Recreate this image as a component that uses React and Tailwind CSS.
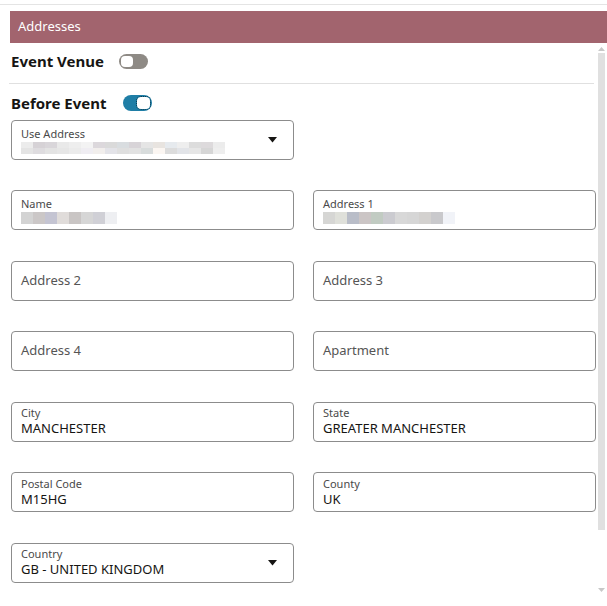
import React from "react";

const font = { fontFamily: '"Noto Sans", "Open Sans", sans-serif' };

function Mosaic({ rows }) {
    return (
        <div className="flex flex-col">
            {rows.map((row, i) => (
                <div key={i} className="flex">
                    {row.map((c, j) => (
                        <div key={j} className="h-[6px] w-[12px]" style={{ backgroundColor: c }} />
                    ))}
                </div>
            ))}
        </div>
    );
}

function Caret() {
    return (
        <svg width="9" height="6" viewBox="0 0 9 6" className="shrink-0">
            <path d="M0 0 L9 0 L4.5 5.5 Z" fill="#161513" />
        </svg>
    );
}

function Field({ label, value, blur, select, empty }) {
    return (
        <div className="h-10 rounded-[4px] border border-[#8c8c8c] bg-white flex items-center pl-[9px] pr-[16px]">
            {empty ? (
                <span className="text-[13px] text-[#555555]">{label}</span>
            ) : (
                <div className="flex-1 flex flex-col justify-center min-w-0">
                    <span className="text-[11px] leading-[14px] text-[#4a4a4a]">{label}</span>
                    {blur ? (
                        <div className="mt-[1px]">{blur}</div>
                    ) : (
                        <span className="text-[13px] leading-[17px] text-[#161513]">{value}</span>
                    )}
                </div>
            )}
            {select && <Caret />}
        </div>
    );
}

function Toggle({ on }) {
    return on ? (
        <div className="w-[29px] h-[16px] rounded-full bg-[#1f7ea6] flex items-center justify-end pr-[2px]">
            <div className="w-[13px] h-[12px] rounded-[4px] bg-white outline-1 outline-dotted outline-[#0b3c52]" />
        </div>
    ) : (
        <div className="w-[29px] h-[15px] rounded-full bg-[#8e8a85] flex items-center pl-[2px]">
            <div className="w-[12px] h-[11px] rounded-[4px] bg-white" />
        </div>
    );
}

const useAddrRows = [
    ["#ececec", "#d6d2d6", "#d9d6da", "#e9e9e9", "#eeeeee", "#f3f3f3", "#dcd8dc", "#dadada", "#d9dde0", "#d8d4d8", "#e5e5e5", "#e8e4e0", "#e6eaee", "#eeeeee", "#dcdcdc", "#dddadc", "#ececec"],
    ["#e4e4e4", "#dedcdf", "#e3e3e3", "#e6e6e6", "#ebebeb", "#efedf2", "#f1eeec", "#e3e3e8", "#dfdfdf", "#e2e2e2", "#d8dcdc", "#fbf6f2", "#dcdcdc", "#e2e4e8", "#e6e6e6", "#d6d6d6", "#eeeeee"],
];
const nameRow = ["#d3d3d3", "#cbc7c7", "#c4c4d2", "#e0dcda", "#c9c5c4", "#d6d6d6", "#d0d0d6", "#eeeff2"];
const addr1Row = ["#d6d6d4", "#dfe0da", "#b9bdc8", "#cbc5c5", "#c1cbc2", "#cbcbd0", "#d8d8d8", "#d6d6d6", "#d3d1cf", "#c9c9cc", "#f1f3f8"];

export default function App() {
    return (
        <div className="w-[607px] h-[606px] bg-white overflow-hidden pt-[4px]" style={font}>
            <div className="h-px bg-[#e4e4e4]" />
            <div className="pl-[10px] pt-[6px]">
                <div className="h-[32px] bg-[#a2646e] flex items-center px-[8px] text-[13px] text-white">Addresses</div>
            </div>
            <div className="flex">
                <div className="w-[596px] shrink-0 pl-[11px]">
                    <div className="h-[40px] flex items-center gap-[15px] pb-[4px]">
                        <span className="text-[15px] font-bold text-[#161513]">Event Venue</span>
                        <Toggle />
                    </div>
                    <div className="h-px bg-[#e0e0e0] -ml-[2px] mr-[2px]" />
                    <div className="h-[36px] flex items-center gap-[16px] pt-[2px]">
                        <span className="text-[15px] font-bold text-[#161513]">Before Event</span>
                        <Toggle on />
                    </div>
                    <div className="w-[283px]">
                        <Field label="Use Address" select blur={<Mosaic rows={useAddrRows} />} />
                    </div>
                    <div className="mt-[30px] grid grid-cols-2 gap-x-[19px] gap-y-[30.6px] w-[585px]">
                        <Field label="Name" blur={<Mosaic rows={[nameRow, nameRow]} />} />
                        <Field label="Address 1" blur={<Mosaic rows={[addr1Row, addr1Row]} />} />
                        <Field label="Address 2" empty />
                        <Field label="Address 3" empty />
                        <Field label="Address 4" empty />
                        <Field label="Apartment" empty />
                        <Field label="City" value="MANCHESTER" />
                        <Field label="State" value="GREATER MANCHESTER" />
                        <Field label="Postal Code" value="M15HG" />
                        <Field label="County" value="UK" />
                        <Field label="Country" value="GB - UNITED KINGDOM" select />
                    </div>
                </div>
                <div className="w-[11px] flex flex-col items-center pt-[4px] h-[558px]">
                    <svg width="7" height="4" viewBox="0 0 7 4"><path d="M0 4 L3.5 0 L7 4 Z" fill="#c8c8c8" /></svg>
                    <div className="mt-[2px] w-[7px] h-[477px] bg-[#e0e0e0]" />
                    <div className="flex-1" />
                    <svg width="7" height="4" viewBox="0 0 7 4" className="mb-[9px]"><path d="M0 0 L7 0 L3.5 4 Z" fill="#c8c8c8" /></svg>
                </div>
            </div>
        </div>
    );
}
